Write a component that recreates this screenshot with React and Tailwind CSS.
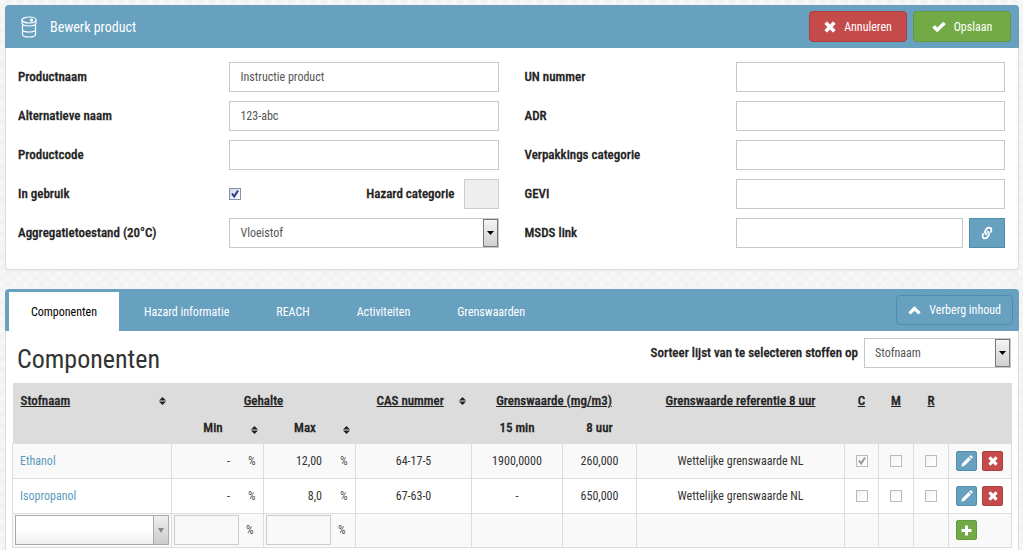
import { useState } from "react";
import { FaLink } from "react-icons/fa";

const tabs = ["Componenten", "Hazard informatie", "REACH", "Activiteiten", "Grenswaarden"];

const components = [
  { name: "Ethanol", min: "-", max: "12,00", cas: "64-17-5", short: "1900,0000", long: "260,000", ref: "Wettelijke grenswaarde NL", c: true },
  { name: "Isopropanol", min: "-", max: "8,0", cas: "67-63-0", short: "-", long: "650,000", ref: "Wettelijke grenswaarde NL", c: false },
];

const control = "h-[30px] w-full min-w-0 border border-[#c8c8c8] bg-white px-[10px] text-[#555] outline-none";
const bold = "text-[13px] font-medium text-[#222] [-webkit-text-stroke:thin]";
const cell = "border-x border-t border-[#ddd]";

function DrumIcon() {
  return (
    <svg width="18" height="22" viewBox="0 0 18 22" fill="none" stroke="white" strokeWidth="1.200">
      <ellipse cx="9" cy="4" rx="7" ry="3" />
      <path d="M2 4v3c0 1.700 3 3 7 3s7-1.300 7-3V4M2.500 9v4.500c0 1.500 3 2.500 6.500 2.500s6.500-1 6.500-2.500V9M2.500 14.500v4c0 1.500 3 2.500 6.500 2.500s6.500-1 6.500-2.500v-4" />
      <circle cx="11.500" cy="4.200" r="1" fill="white" />
    </svg>
  );
}

function CrossIcon({ size = 12 }) {
  return (
    <svg width={size} height={size} viewBox="0 0 12 12" fill="currentColor">
      <path d="M3.300.700 6 3.400 8.700.700a.5.5 0 0 1 .7 0l1.900 1.900a.5.5 0 0 1 0 .7L8.600 6l2.700 2.700a.5.5 0 0 1 0 .7l-1.900 1.900a.5.5 0 0 1-.7 0L6 8.600l-2.700 2.700a.5.5 0 0 1-.7 0L.7 9.400a.5.5 0 0 1 0-.7L3.400 6 .7 3.300a.5.5 0 0 1 0-.7L2.600.7a.5.5 0 0 1 .7 0Z" />
    </svg>
  );
}

function CheckIcon() {
  return (
    <svg width="14" height="12" viewBox="0 0 14 12" fill="currentColor">
      <path d="M.6 6.300 2.500 4.400a.5.5 0 0 1 .7 0L5.300 6.500 11 1a.5.5 0 0 1 .7 0l1.700 1.700a.5.5 0 0 1 0 .7L5.600 11a.5.5 0 0 1-.7 0L.6 7a.5.5 0 0 1 0-.7Z" />
    </svg>
  );
}

function ChevronUpIcon() {
  return (
    <svg width="13" height="9" viewBox="0 0 13 9" fill="currentColor">
      <path d="M6.100.6a.5.5 0 0 1 .8 0l5.500 5.300a.5.5 0 0 1 0 .7l-1.600 1.600a.5.5 0 0 1-.7 0L6.500 4.700 2.900 8.200a.5.5 0 0 1-.7 0L.6 6.600a.5.5 0 0 1 0-.7Z" />
    </svg>
  );
}

function PencilIcon() {
  return (
    <svg width="12" height="12" viewBox="0 0 12 12" fill="currentColor">
      <path d="M.3 11.700 1.200 8.500 7.600 2.100 9.900 4.400 3.500 10.800ZM8.200 1.500 9.200.5a.7.7 0 0 1 1 0l1.300 1.300a.7.7 0 0 1 0 1l-1 1Z" />
    </svg>
  );
}

function PlusIcon() {
  return (
    <svg width="11" height="11" viewBox="0 0 11 11" fill="currentColor">
      <path d="M4 .5h3V4h3.500v3H7v3.500H4V7H.5V4H4Z" />
    </svg>
  );
}

function SortIcon() {
  return (
    <svg width="7" height="8" viewBox="0 0 7 8" className="shrink-0 text-[#222]" fill="currentColor">
      <path d="M3.500 0 7 3.500H0ZM0 4.500h7L3.500 8Z" />
    </svg>
  );
}

function CheckBox({ id, label, defaultChecked, disabled }) {
  return (
    <span className="relative inline-block size-3 align-middle">
      <input
        id={id}
        type="checkbox"
        aria-label={label}
        defaultChecked={defaultChecked}
        disabled={disabled}
        className="peer block size-3 appearance-none border border-[#8292ab] bg-linear-to-br from-[#d0d6e6] to-white disabled:border-[#bbb] disabled:from-[#f4f4f4]"
      />
      <svg
        viewBox="0 0 12 12"
        className="pointer-events-none invisible absolute inset-0 size-3 fill-none stroke-[#2c3a80] stroke-2 peer-checked:visible peer-disabled:stroke-[#999]"
      >
        <path d="M3 5.500 5.200 8.500 9 2.500" />
      </svg>
    </span>
  );
}

function Select({ id, value }) {
  return (
    <div className="relative w-full">
      <select id={id} defaultValue={value} className={`${control} block appearance-none`}>
        <option>{value}</option>
      </select>
      <span className="pointer-events-none absolute inset-y-px right-px flex w-[15px] items-center justify-center border border-[#777] bg-linear-to-b from-[#f4f4f4] to-[#d0d0d0]">
        <svg width="7" height="4" viewBox="0 0 7 4">
          <path d="M0 0h7L3.500 4Z" />
        </svg>
      </span>
    </div>
  );
}

function Field({ id, label, children }) {
  return (
    <div className="flex items-center">
      <label htmlFor={id} className={`w-[44%] shrink-0 ${bold}`}>
        {label}
      </label>
      <div className="flex min-w-0 flex-1 items-center">{children}</div>
    </div>
  );
}

function TextField({ id, label, value }) {
  return (
    <Field id={id} label={label}>
      <input id={id} type="text" defaultValue={value} className={control} />
    </Field>
  );
}

function ProductPanel() {
  return (
    <section className="rounded border border-[#ddd] bg-white shadow-xs">
      <header className="-mx-px -mt-px flex h-[43px] items-center rounded-t bg-[#67a1bf] pr-2 pl-[15px] text-white">
        <DrumIcon />
        <h1 className="ml-3 flex-1 text-sm">Bewerk product</h1>
        <div className="flex gap-[6px]">
          <button className="flex h-[31px] w-[98px] items-center justify-center gap-2 rounded border border-[#ad3c3c] bg-[#c54b4a]">
            <CrossIcon />
            Annuleren
          </button>
          <button className="flex h-[31px] w-[98px] items-center justify-center gap-2 rounded border border-[#62993a] bg-[#73aa45]">
            <CheckIcon />
            Opslaan
          </button>
        </div>
      </header>

      <form className="grid grid-cols-2 gap-x-[26px] pt-[14px] pr-[13px] pb-[21px] pl-3">
        <div className="flex flex-col gap-[9px]">
          <TextField id="name" label="Productnaam" value="Instructie product" />
          <TextField id="alt" label="Alternatieve naam" value="123-abc" />
          <TextField id="code" label="Productcode" />
          <Field id="used" label="In gebruik">
            <CheckBox id="used" defaultChecked />
            <label htmlFor="hazard" className={`mr-[9px] ml-auto ${bold}`}>
              Hazard categorie
            </label>
            <input id="hazard" type="text" disabled className="h-[30px] w-[35px] border border-[#ccc] bg-[#eee]" />
          </Field>
          <Field id="state" label="Aggregatietoestand (20°C)">
            <Select id="state" value="Vloeistof" />
          </Field>
        </div>
        <div className="flex flex-col gap-[9px]">
          <TextField id="un" label="UN nummer" />
          <TextField id="adr" label="ADR" />
          <TextField id="pack" label="Verpakkings categorie" />
          <TextField id="gevi" label="GEVI" />
          <Field id="msds" label="MSDS link">
            <input id="msds" type="text" className={control} />
            <button
              type="button"
              aria-label="MSDS link"
              className="ml-[6px] flex h-[30px] w-9 shrink-0 items-center justify-center border border-[#4e8fb0] bg-[#67a1bf] text-white"
            >
              <FaLink size={12} className="-rotate-12" />
            </button>
          </Field>
        </div>
      </form>
    </section>
  );
}

function ActionButton({ label, className, children }) {
  return (
    <button
      aria-label={label}
      className={`flex h-5 w-[21px] items-center justify-center rounded-xs border text-white ${className}`}
    >
      {children}
    </button>
  );
}

function Percentage({ value }) {
  return (
    <div className="flex">
      <span className="w-[58px] text-right">{value}</span>
      <span className="ml-[18px] text-[#555]">%</span>
    </div>
  );
}

function ComponentTable() {
  return (
    <table className="w-full table-fixed border-collapse border-b border-[#ddd] text-center text-[#333]">
      <colgroup>
        <col className="w-[159px]" />
        <col className="w-[92px]" />
        <col className="w-[92px]" />
        <col className="w-[116px]" />
        <col className="w-[91px]" />
        <col className="w-[74px]" />
        <col />
        <col className="w-[34px]" />
        <col className="w-[35px]" />
        <col className="w-[35px]" />
        <col className="w-[63px]" />
      </colgroup>
      <thead className="bg-[#dcdcdc] [&_th]:font-medium">
        <tr className={`h-[35px] underline ${bold}`}>
          <th>
            <div className="flex items-center justify-between pr-[6px] pl-2">
              Stofnaam <SortIcon />
            </div>
          </th>
          <th colSpan="2">Gehalte</th>
          <th>
            <div className="flex items-center justify-between pr-[6px] pl-[21px]">
              CAS nummer <SortIcon />
            </div>
          </th>
          <th colSpan="2">Grenswaarde (mg/m3)</th>
          <th>Grenswaarde referentie 8 uur</th>
          <th>C</th>
          <th>M</th>
          <th>R</th>
          <th></th>
        </tr>
        <tr className={`h-[25px] align-top ${bold}`}>
          <th></th>
          {["Min", "Max"].map((title) => (
            <th key={title}>
              <div className="flex items-end justify-between pr-[6px]">
                <span className="flex-1 pl-1">{title}</span>
                <span className="flex h-5 items-end pb-1">
                  <SortIcon />
                </span>
              </div>
            </th>
          ))}
          <th></th>
          <th>15 min</th>
          <th>8 uur</th>
          <th colSpan="5"></th>
        </tr>
      </thead>
      <tbody>
        {components.map((row) => (
          <tr key={row.name} className="h-[35px] odd:bg-[#f9f9f9]">
            <td className={`${cell} pl-[7px] text-left`}>
              <a href="#" className="text-[#5a9abd]">
                {row.name}
              </a>
            </td>
            <td className={cell}>
              <Percentage value={row.min} />
            </td>
            <td className={cell}>
              <Percentage value={row.max} />
            </td>
            <td className={cell}>{row.cas}</td>
            <td className={cell}>{row.short}</td>
            <td className={cell}>{row.long}</td>
            <td className={cell}>{row.ref}</td>
            <td className={cell}>
              <CheckBox label="C" defaultChecked={row.c} disabled />
            </td>
            <td className={cell}>
              <CheckBox label="M" disabled />
            </td>
            <td className={cell}>
              <CheckBox label="R" disabled />
            </td>
            <td className={cell}>
              <div className="flex gap-[5px] pl-[7px]">
                <ActionButton label="Bewerken" className="border-[#4e8fb0] bg-[#67a1bf]">
                  <PencilIcon />
                </ActionButton>
                <ActionButton label="Verwijderen" className="border-[#ad3c3c] bg-[#c54b4a]">
                  <CrossIcon size={10} />
                </ActionButton>
              </div>
            </td>
          </tr>
        ))}

        {/* New component */}
        <tr className="h-[34px] bg-[#f9f9f9]">
          <td className={`${cell} px-[2px]`}>
            <div className="relative">
              <select
                aria-label="Stofnaam"
                className="block h-[30px] w-full appearance-none border border-[#aaa] bg-linear-to-t from-[#eee] to-white to-50%"
              />
              <span className="pointer-events-none absolute inset-y-px right-px flex w-[15px] items-center justify-center border-l border-[#aaa] bg-linear-to-t from-[#ccc] to-[#eee]">
                <svg width="6" height="5" viewBox="0 0 6 5" fill="#888">
                  <path d="M0 0h6L3 5Z" />
                </svg>
              </span>
            </div>
          </td>
          {["Min", "Max"].map((title) => (
            <td key={title} className={cell}>
              <div className="flex items-center gap-[7px] pl-[2px] text-[#555]">
                <input type="text" aria-label={title} className="h-[30px] w-[65px] border border-[#ccc] bg-[#f9f9f9]" />%
              </div>
            </td>
          ))}
          <td className={cell}></td>
          <td className={cell}></td>
          <td className={cell}></td>
          <td className={cell}></td>
          <td className={cell}></td>
          <td className={cell}></td>
          <td className={cell}></td>
          <td className={cell}>
            <div className="pl-[7px]">
              <ActionButton label="Toevoegen" className="border-[#62993a] bg-[#73aa45]">
                <PlusIcon />
              </ActionButton>
            </div>
          </td>
        </tr>
      </tbody>
    </table>
  );
}

function ComponentPanel() {
  const [active, setActive] = useState("Componenten");

  return (
    <section className="rounded-t border-x border-[#ddd] bg-white">
      <nav className="-mx-px flex h-[42px] items-end rounded-t bg-[#67a1bf] pr-[6px] pl-1 text-white">
        <div className="flex flex-1 gap-[3px]">
          {tabs.map((tab) => (
            <button
              key={tab}
              onClick={() => setActive(tab)}
              className={`h-[39px] px-[22px] ${tab === active ? "bg-white text-black" : ""}`}
            >
              {tab}
            </button>
          ))}
        </div>
        <button className="mb-[6px] flex h-[30px] items-center gap-2 rounded border border-[#4e8fb0] px-[11px]">
          <ChevronUpIcon />
          Verberg inhoud
        </button>
      </nav>

      <div className="flex h-[52px] items-center justify-between pr-[7px] pl-[11px]">
        <h2 className="pt-1 text-[26px] text-[#333]">Componenten</h2>
        <div className="flex items-center gap-[6px] pb-2">
          <label htmlFor="sort" className={`whitespace-nowrap ${bold}`}>
            Sorteer lijst van te selecteren stoffen op
          </label>
          <div className="w-[147px]">
            <Select id="sort" value="Stofnaam" />
          </div>
        </div>
      </div>

      <div className="px-[6px] pb-[3px]">
        <ComponentTable />
      </div>
    </section>
  );
}

function App() {
  return (
    <main className="flex min-h-screen flex-col gap-[19px] bg-[#f7f7f7] bg-[repeating-linear-gradient(45deg,#ececec44_0_4px,transparent_4px_8px),repeating-linear-gradient(-45deg,#ececec44_0_4px,transparent_4px_8px)] pt-[5px] pr-1 pl-[5px] font-['Roboto_Condensed','Roboto',sans-serif] text-xs leading-5">
      <ProductPanel />
      <ComponentPanel />
    </main>
  );
}

export default App;
